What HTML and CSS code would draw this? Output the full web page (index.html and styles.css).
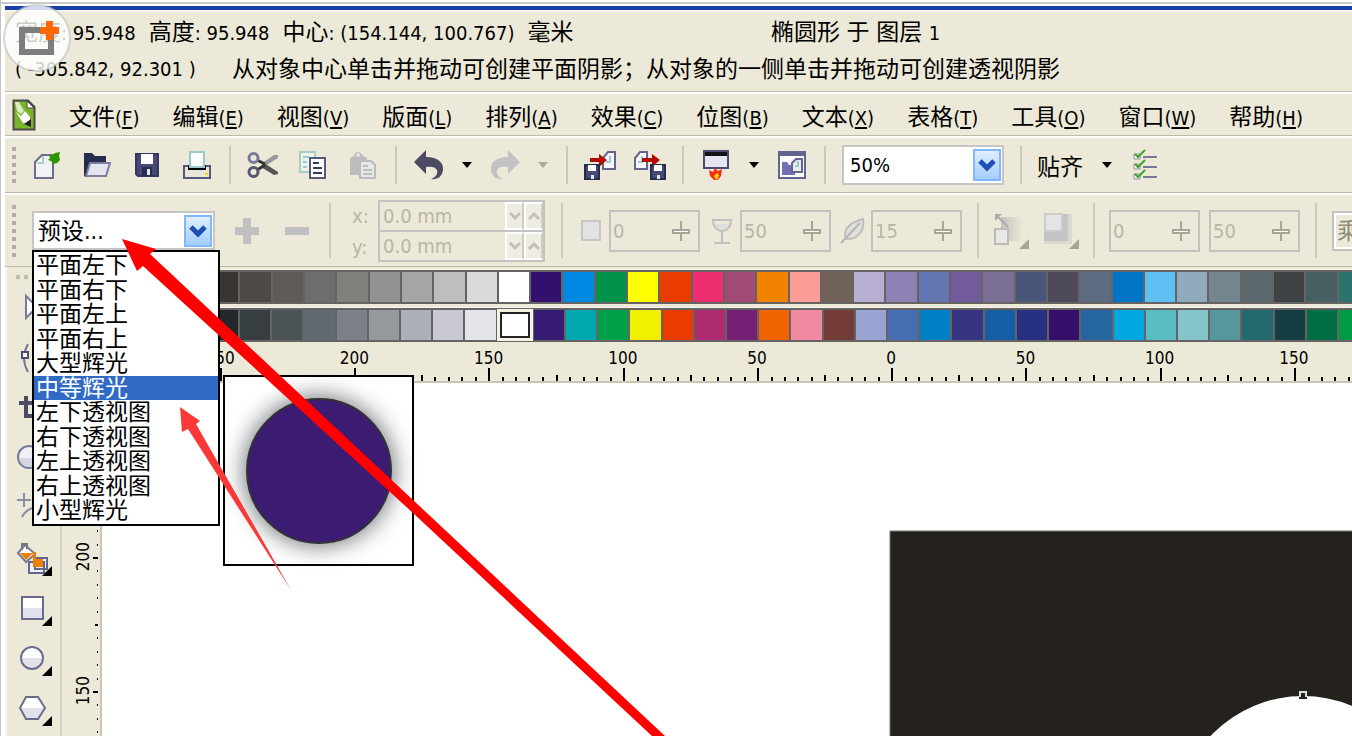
FILE: index.html
```html
<!DOCTYPE html>
<html lang="zh-CN">
<head>
    <meta charset="UTF-8">
    <meta name="viewport" content="width=device-width, initial-scale=1.0">
    <title>CorelDRAW</title>
    <link rel="stylesheet" href="styles.css">
</head>
<body>
    <div class="window">
        <div class="titleBar"></div>

        <div class="statusBar">
            <div class="statusRow">
                <div class="sizeInfo">
                    <span>宽度<span class="num">: 95.948</span></span>
                    <span>高度<span class="num">: 95.948</span></span>
                    <span>中心<span class="num">: (154.144, 100.767)</span></span>
                    <span>毫米</span>
                </div>
                <span>椭圆形 于 图层 <span class="num">1</span></span>
            </div>
            <div class="statusRow">
                <span class="cursorInfo num">( -305.842, 92.301 )</span>
                <span>从对象中心单击并拖动可创建平面阴影；从对象的一侧单击并拖动可创建透视阴影</span>
            </div>
        </div>

        <nav class="menuBar">
            <svg class="docIcon" width="24" height="32" viewBox="0 0 24 32">
                <path d="M1.500 1.500H16L22.500 8V30.500H1.500Z" fill="#7cb32c" stroke="#4a4a4a" stroke-width="2"/>
                <path d="M15 2V9H22Z" fill="#fff" stroke="#4a4a4a"/>
                <path d="M3 3L7 3L12 12L9 15L5 12Z" fill="#dcebc2"/>
                <path d="M4 13L9 17L13 12L18 18V25L11 24Z" fill="#fff"/>
                <path d="M12 25L19 20V28Z" fill="#222"/>
            </svg>
            <button>文件<span>(<u>F</u>)</span></button>
            <button>编辑<span>(<u>E</u>)</span></button>
            <button>视图<span>(<u>V</u>)</span></button>
            <button>版面<span>(<u>L</u>)</span></button>
            <button>排列<span>(<u>A</u>)</span></button>
            <button>效果<span>(<u>C</u>)</span></button>
            <button>位图<span>(<u>B</u>)</span></button>
            <button>文本<span>(<u>X</u>)</span></button>
            <button>表格<span>(<u>T</u>)</span></button>
            <button>工具<span>(<u>O</u>)</span></button>
            <button>窗口<span>(<u>W</u>)</span></button>
            <button>帮助<span>(<u>H</u>)</span></button>
        </nav>

        <div class="toolbar standardBar">
            <span class="grip"></span>
            <button class="iconBtn" aria-label="新建">
                <svg width="28" height="30" viewBox="0 0 28 30">
                    <path d="M2 28V12L9 5H20V28Z" fill="#f2f2f6" stroke="#6b6e8c" stroke-width="2"/>
                    <path d="M4 13H10V6" fill="#fff" stroke="#a9cfcc" stroke-width="2"/>
                    <path d="M16 5L20 5L22 3L27 2L26 6L27 10L24 13L20 14L18 11L15 10L17 8Z" fill="#2e9400"/>
                </svg>
            </button>
            <button class="iconBtn" aria-label="打开">
                <svg width="28" height="28" viewBox="0 0 28 28">
                    <path d="M1 25V2H9L12 5H23V12H8L3 26Z" fill="#252c4e"/>
                    <path d="M7 12H27L23 25H3Z" fill="#e4e5ef" stroke="#7a7d9c" stroke-width="2"/>
                </svg>
            </button>
            <button class="iconBtn" aria-label="保存">
                <svg width="24" height="24" viewBox="0 0 24 24">
                    <path d="M1 1H23V23H3L1 21Z" fill="#484877" stroke="#343761" stroke-width="2"/>
                    <path d="M6 1H18V11H6Z" fill="#fff"/><path d="M7 14H17V23H7Z" fill="#252c4e"/>
                    <path d="M12 16H15V22H12Z" fill="#e4e5ef"/>
                </svg>
            </button>
            <button class="iconBtn" aria-label="打印">
                <svg width="28" height="28" viewBox="0 0 28 28">
                    <path d="M1 15H27V27H1Z" fill="#e6e6da" stroke="#55597a" stroke-width="2"/>
                    <path d="M5 14H23V19H5Z" fill="#000"/>
                    <path d="M7 1H21V16H7Z" fill="#fff" stroke="#9cc" stroke-width="2"/>
                    <path d="M22 22H25V24H22Z" fill="#f5d900"/>
                </svg>
            </button>
            <span class="sep"></span>
            <button class="iconBtn" aria-label="剪切">
                <svg width="32" height="26" viewBox="0 0 32 26" fill="none">
                    <path d="M31 3L27 3L14 12L18 14L31 6Z" fill="#999"/><path d="M31 22L27 23L14 15L17 11L31 20Z" fill="#555"/>
                    <path d="M18 12L10 8M18 13L10 18" stroke="#333" stroke-width="3"/>
                    <circle cx="6.500" cy="6" r="4.500" stroke="#77799a" stroke-width="3"/>
                    <circle cx="6.500" cy="20" r="4.500" stroke="#55586f" stroke-width="3"/>
                </svg>
            </button>
            <button class="iconBtn" aria-label="复制">
                <svg width="28" height="28" viewBox="0 0 28 28">
                    <path d="M1 1H16V21H1Z" fill="#edf3e8" stroke="#a5cdc8" stroke-width="2"/>
                    <path d="M4 6H10M4 11H8M4 16H8" stroke="#9cc" stroke-width="2"/>
                    <path d="M11 7H26V27H11Z" fill="#fff" stroke="#55597a" stroke-width="2"/>
                    <path d="M14 12H20M14 17H23M14 22H23" stroke="#333a5c" stroke-width="2"/>
                </svg>
            </button>
            <button class="iconBtn" aria-label="粘贴" disabled>
                <svg width="28" height="28" viewBox="0 0 28 28">
                    <path d="M1 7L5 5Q6 1 9 1T14 5L18 7V24H1Z" fill="#bcbcbc"/>
                    <circle cx="9" cy="4" r="2" fill="#e8e8e0"/>
                    <path d="M11 10H22L26 14V27H11Z" fill="#e8e8e8" stroke="#bcbcbc" stroke-width="2"/>
                    <path d="M14 15H19M14 19H23M14 23H23" stroke="#bcbcbc" stroke-width="2"/>
                </svg>
            </button>
            <span class="sep"></span>
            <button class="iconBtn" aria-label="撤消">
                <svg width="30" height="30" viewBox="0 0 30 30">
                    <path d="M0 12L12 0V7C24 7 30 13 29 20C28 27 23 30 17 29C22 27 24 24 23 20C21 17 18 16 12 17V24Z" fill="#4d4b62"/>
                </svg>
            </button>
            <button class="caretBtn" aria-label="撤消列表"><span class="caret"></span></button>
            <button class="iconBtn" aria-label="重做" disabled>
                <svg width="30" height="30" viewBox="0 0 30 30">
                    <path d="M30 12L18 0V7C6 7 0 13 1 20C2 27 7 30 13 29C8 27 6 24 7 20C9 17 12 16 18 17V24Z" fill="#c2c2c2"/>
                </svg>
            </button>
            <button class="caretBtn" aria-label="重做列表" disabled><span class="caret off"></span></button>
            <span class="sep"></span>
            <button class="iconBtn" aria-label="导入">
                <svg width="32" height="30" viewBox="0 0 32 30">
                    <path d="M19 19V8L24 2H31V19Z" fill="#f6f6fa" stroke="#62668c" stroke-width="2"/>
                    <path d="M22 12H26V6" fill="none" stroke="#9cc" stroke-width="2"/>
                    <path d="M6 8H15V4L23 10L15 17V12H6Z" fill="#b30b00"/>
                    <path d="M1 15H15V29H1Z" fill="#484877" stroke="#252c4e" stroke-width="2"/>
                    <path d="M4 15H12V21H4Z" fill="#fff"/><path d="M7 25H10V29H7Z" fill="#e4e5ef"/>
                </svg>
            </button>
            <button class="iconBtn" aria-label="导出">
                <svg width="32" height="30" viewBox="0 0 32 30">
                    <path d="M1 19V8L6 2H13V19Z" fill="#f6f6fa" stroke="#62668c" stroke-width="2"/>
                    <path d="M4 12H8V6" fill="none" stroke="#9cc" stroke-width="2"/>
                    <path d="M8 8H18V4L26 10L18 17V12H8Z" fill="#b30b00"/>
                    <path d="M17 15H31V29H17Z" fill="#484877" stroke="#252c4e" stroke-width="2"/>
                    <path d="M20 15H28V21H20Z" fill="#fff"/><path d="M23 25H26V29H23Z" fill="#e4e5ef"/>
                </svg>
            </button>
            <span class="sep"></span>
            <button class="iconBtn" aria-label="应用程序启动器">
                <svg width="26" height="30" viewBox="0 0 26 30">
                    <path d="M1 1H25V18H1Z" fill="#e4e5ef" stroke="#4d4b72" stroke-width="2"/>
                    <path d="M2 2H24V6H2Z" fill="#111"/>
                    <path d="M6 20L10 22L12 18L15 21L19 19L18 26L15 30H11L7 26Z" fill="#f33214"/>
                    <path d="M11 26L14 23L16 25L15 28L14 30L12 28Z" fill="#ffd400"/>
                </svg>
            </button>
            <button class="caretBtn" aria-label="启动器列表"><span class="caret"></span></button>
            <button class="iconBtn" aria-label="欢迎屏幕">
                <svg width="28" height="28" viewBox="0 0 28 28">
                    <path d="M1 1H27V27H1Z" fill="#fff" stroke="#62668c" stroke-width="2"/>
                    <path d="M1 1H27V5H1Z" fill="#62668c"/>
                    <path d="M4 11H9L11 14H17V24H4Z" fill="#7270b4"/>
                    <path d="M14 21V12L18 8H24V21Z" fill="#e8eaf2" stroke="#62668c" stroke-width="2"/>
                    <path d="M17 15H20V10" fill="none" stroke="#9cc" stroke-width="2"/>
                </svg>
            </button>
            <span class="sep"></span>
            <select class="zoomSelect" aria-label="缩放级别"><option>50%</option></select>
            <span class="sep"></span>
            <button class="snapBtn">贴齐</button>
            <button class="caretBtn" aria-label="贴齐列表"><span class="caret"></span></button>
            <button class="iconBtn" aria-label="选项">
                <svg width="26" height="32" viewBox="0 0 26 32" fill="none">
                    <path d="M11 8H25M11 18H25M11 28H25" stroke="#77799a" stroke-width="2"/>
                    <path d="M2 5H8V10H2ZM2 15H8V20H2ZM2 25H8V30H2Z" fill="#fff" stroke="#8a8ca5"/>
                    <path d="M3 5L6 8L13 1M3 15L6 18L13 11M3 25L6 28L13 21" stroke="#3fa52c" stroke-width="2"/>
                </svg>
            </button>
        </div>

        <div class="toolbar propertyBar">
            <span class="grip"></span>
            <div class="presetBox">
                <select class="presetSelect" aria-label="预设列表"><option>预设...</option></select>
                <ul class="presetList" role="listbox" aria-label="预设">
                    <li role="option">平面左下</li>
                    <li role="option">平面右下</li>
                    <li role="option">平面左上</li>
                    <li role="option">平面右上</li>
                    <li role="option">大型辉光</li>
                    <li role="option" class="selected" aria-selected="true">中等辉光</li>
                    <li role="option">左下透视图</li>
                    <li role="option">右下透视图</li>
                    <li role="option">左上透视图</li>
                    <li role="option">右上透视图</li>
                    <li role="option">小型辉光</li>
                </ul>
                <div class="presetPreview"><div class="glowCircle"></div></div>
            </div>
            <button class="iconBtn" aria-label="添加预设" disabled>
                <svg width="24" height="26" viewBox="0 0 24 26"><path d="M8 0H16V9H24V17H16V26H8V17H0V9H8Z" fill="#c0c0c0"/></svg>
            </button>
            <button class="iconBtn" aria-label="删除预设" disabled>
                <svg width="24" height="26" viewBox="0 0 24 26"><path d="M0 9H24V17H0Z" fill="#c0c0c0"/></svg>
            </button>
            <span class="sep"></span>
            <div class="offsetGroup">
                <label for="offsetX">x:</label>
                <div class="offsetField">
                    <input id="offsetX" type="text" value="0.0 mm" disabled>
                    <button disabled aria-label="减小 x"><svg width="12" height="8" viewBox="0 0 12 8"><path d="M1 1L6 6L11 1" fill="none" stroke="#c3c0b6" stroke-width="3"/></svg></button>
                    <button disabled aria-label="增大 x"><svg width="12" height="8" viewBox="0 0 12 8"><path d="M1 7L6 2L11 7" fill="none" stroke="#c3c0b6" stroke-width="3"/></svg></button>
                </div>
                <label for="offsetY">y:</label>
                <div class="offsetField">
                    <input id="offsetY" type="text" value="0.0 mm" disabled>
                    <button disabled aria-label="减小 y"><svg width="12" height="8" viewBox="0 0 12 8"><path d="M1 1L6 6L11 1" fill="none" stroke="#c3c0b6" stroke-width="3"/></svg></button>
                    <button disabled aria-label="增大 y"><svg width="12" height="8" viewBox="0 0 12 8"><path d="M1 7L6 2L11 7" fill="none" stroke="#c3c0b6" stroke-width="3"/></svg></button>
                </div>
            </div>
            <span class="sep"></span>
            <label class="sliderField">
                <svg width="32" height="26" viewBox="0 0 32 26"><path d="M6 3H24V22H6Z" fill="#e2e2e2" stroke="#c6c6c6" stroke-width="2"/></svg>
                <span class="box"><input type="text" value="0" aria-label="阴影角度" disabled><svg class="knob" width="18" height="20" viewBox="0 0 18 20"><path d="M8 0H10V8H18V13H10V20H8V13H0V8H8Z" fill="#a8a595"/><path d="M2 10H16V11H2Z" fill="#fff"/></svg></span>
            </label>
            <label class="sliderField">
                <svg width="32" height="26" viewBox="0 0 32 26" fill="none"><path d="M6 2H24Q24 12 15 13Q6 12 6 2ZM15 13V24M7 25H23" stroke="#c0c0c0" stroke-width="2"/><path d="M8 6H22Q20 12 15 12T8 6Z" fill="#dedede"/></svg>
                <span class="box"><input type="text" value="50" aria-label="不透明度" disabled><svg class="knob" width="18" height="20" viewBox="0 0 18 20"><path d="M8 0H10V8H18V13H10V20H8V13H0V8H8Z" fill="#a8a595"/><path d="M2 10H16V11H2Z" fill="#fff"/></svg></span>
            </label>
            <label class="sliderField">
                <svg width="32" height="26" viewBox="0 0 32 26"><path d="M8 21C4 10 14 4 25 1C27 12 20 22 8 21Z" fill="#e0e0dd" stroke="#bdbdbd" stroke-width="2"/><path d="M3 25L22 5" stroke="#b5b5b5" stroke-width="2" fill="none"/></svg>
                <span class="box"><input type="text" value="15" aria-label="阴影羽化" disabled><svg class="knob" width="18" height="20" viewBox="0 0 18 20"><path d="M8 0H10V8H18V13H10V20H8V13H0V8H8Z" fill="#a8a595"/><path d="M2 10H16V11H2Z" fill="#fff"/></svg></span>
            </label>
            <span class="sep"></span>
            <button class="iconBtn" aria-label="羽化方向" disabled>
                <svg width="36" height="36" viewBox="0 0 36 36">
                    <defs><linearGradient id="fade"><stop offset="0" stop-color="#c4c3bd"/><stop offset="1" stop-color="#ece9d8"/></linearGradient></defs>
                    <path d="M8 4H30V28H8Z" fill="url(#fade)"/>
                    <path d="M4 3L15 14" fill="none" stroke="#aaa" stroke-width="2"/><path d="M2 1H9L2 8Z" fill="#aaa"/>
                    <path d="M2 16H15V31H2Z" fill="#e8e8e8" stroke="#bbb" stroke-width="2"/>
                    <path d="M36 26V36H26Z" fill="#a8a595"/>
                </svg>
            </button>
            <button class="iconBtn" aria-label="羽化边缘" disabled>
                <svg width="36" height="36" viewBox="0 0 36 36">
                    <path d="M1 1H29V31H1Z" fill="#dbd9cf"/><path d="M1 1H25V28H1Z" fill="#c3c3c3"/>
                    <path d="M2 1H19V18H2Z" fill="#e4e4e4" stroke="#ccc" stroke-width="2"/>
                    <path d="M36 26V36H26Z" fill="#a8a595"/>
                </svg>
            </button>
            <span class="sep"></span>
            <span class="sliderField"><span class="box"><input type="text" value="0" aria-label="淡出" disabled><svg class="knob" width="18" height="20" viewBox="0 0 18 20"><path d="M8 0H10V8H18V13H10V20H8V13H0V8H8Z" fill="#a8a595"/><path d="M2 10H16V11H2Z" fill="#fff"/></svg></span></span>
            <span class="sliderField"><span class="box"><input type="text" value="50" aria-label="阴影延展" disabled><svg class="knob" width="18" height="20" viewBox="0 0 18 20"><path d="M8 0H10V8H18V13H10V20H8V13H0V8H8Z" fill="#a8a595"/><path d="M2 10H16V11H2Z" fill="#fff"/></svg></span></span>
            <span class="sep"></span>
            <select class="modeSelect" aria-label="合并模式" disabled><option>乘</option></select>
        </div>

        <div class="workspace">
            <div class="toolbox">
                <span class="gripH"></span>
                <button aria-label="挑选"><svg width="36" height="34" viewBox="0 0 36 34"><path d="M10 4V26L16 20H26Z" fill="#fff" stroke="#77799a" stroke-width="2"/></svg></button>
                <button aria-label="形状"><svg width="36" height="34" viewBox="0 0 36 34" fill="none"><path d="M12 2Q4 16 12 30" stroke="#77799a" stroke-width="2"/><path d="M6 10H12V16H6Z" fill="#fff" stroke="#4d4b72" stroke-width="2"/></svg></button>
                <button aria-label="裁剪"><svg width="36" height="34" viewBox="0 0 36 34"><path d="M10 4V24H28M3 11H22V30" fill="none" stroke="#4d4b62" stroke-width="4"/></svg></button>
                <button aria-label="缩放"><svg width="36" height="34" viewBox="0 0 36 34"><circle cx="13" cy="15" r="11" fill="#f0f0f6" stroke="#77799a" stroke-width="2"/><path d="M3 16H23Q21 25 13 25T3 16Z" fill="#d5d6e4"/></svg></button>
                <button aria-label="手绘"><svg width="36" height="34" viewBox="0 0 36 34"><path d="M8 1V15M1 8H15M6 25Q10 17 20 15" fill="none" stroke="#8a8ca5" stroke-width="2"/></svg></button>
                <button aria-label="智能填充"><svg width="36" height="34" viewBox="0 0 36 34">
                    <path d="M9 3L19 12L10 20L2 11Z" fill="#fff" stroke="#77799a" stroke-width="2"/><path d="M4 11H17L10 18Z" fill="#ee8000"/>
                    <path d="M6 8V2H11V7" fill="none" stroke="#777" stroke-width="2"/>
                    <path d="M13 20H28V31H13ZM19 16H31V27H19Z" fill="#f0f0f6" stroke="#62668c" stroke-width="2"/><path d="M17 10H20V17H27V25H17Z" fill="#ee8000"/>
                    <path d="M36 24V34H26Z"/></svg></button>
                <button aria-label="矩形"><svg width="36" height="34" viewBox="0 0 36 34"><path d="M6 5H27V27H6Z" fill="#fff"/><path d="M6 16H27V27H6Z" fill="#e0e1ea"/><path d="M6 5H27V27H6Z" fill="none" stroke="#6b6c8c" stroke-width="2"/><path d="M36 24V34H26Z"/></svg></button>
                <button aria-label="椭圆形"><svg width="36" height="34" viewBox="0 0 36 34"><circle cx="16" cy="16" r="11" fill="#fff"/><path d="M5 16H27A11 11 0 0 1 5 16Z" fill="#e0e1ea"/><circle cx="16" cy="16" r="11" fill="none" stroke="#6b6c8c" stroke-width="2"/><path d="M36 24V34H26Z"/></svg></button>
                <button aria-label="多边形"><svg width="36" height="34" viewBox="0 0 36 34"><path d="M10 5H22L29 16L22 27H10L4 16Z" fill="#fff"/><path d="M4 16H29L22 27H10Z" fill="#e0e1ea"/><path d="M10 5H22L29 16L22 27H10L4 16Z" fill="none" stroke="#6b6c8c" stroke-width="2"/><path d="M36 24V34H26Z"/></svg></button>
            </div>

            <div class="mainArea">
                <div class="palette" id="paletteTop"></div>
                <div class="palette" id="paletteBottom"></div>
                <div class="ruler rulerH" id="rulerH"></div>
                <div class="drawRow">
                    <div class="ruler rulerV" id="rulerV"></div>
                    <div class="canvas">
                        <svg class="drawing" width="1300" height="500" viewBox="0 0 1300 500">
                            <rect x="788" y="148" width="600" height="500" fill="#25221d" stroke="#77777a"/>
                            <circle cx="1201" cy="440" r="127" fill="#fff"/>
                            <path d="M1198 309H1204V315H1198Z" fill="#222" stroke="#ddd" stroke-width="2"/>
                            <path d="M1197 314H1205V316H1197Z" fill="#222"/>
                        </svg>
                    </div>
                </div>
            </div>
        </div>

        <!-- tutorial marks on top of the window -->
        <svg class="marks" width="700" height="736" viewBox="0 0 700 736">
            <path d="M122 239L156 249L150 254L413 500L665 736H652L413 513L143 266L137 271Z" fill="#f00"/>
            <path d="M180 407L200 421L196 424L291 590L188 429L182 432Z" fill="#fb3838"/>
        </svg>
        <svg class="badge" width="74" height="74" viewBox="0 0 74 74">
            <circle cx="37" cy="37" r="33" fill="#fff" fill-opacity="0.800" stroke="#bbb" stroke-opacity="0.600" stroke-width="2"/>
            <path d="M22 29H51V51H22Z" fill="none" stroke="#7d7d7d" stroke-width="6"/>
            <path d="M46 20H53V26H59V33H53V39H46V33H40V26H46Z" fill="#ff6700"/>
        </svg>
    </div>
    <script src="script.js"></script>
</body>
</html>
```

FILE: styles.css
```css
* {
    box-sizing: border-box;
}

body {
    margin: 0;
    background-color: white;
    color: black;
    font-family: "DejaVu Sans Condensed", "Noto Sans CJK SC", sans-serif;
    font-size: 23px;
}

button, input, select {
    font: inherit;
    color: inherit;
    margin: 0;
}

button {
    padding: 0;
    border: none;
    background: none;
}

.window {
    position: relative;
    display: flex;
    flex-direction: column;
    height: 100vh;
    padding: 3px 0 0 4px;
    border-left: 1px solid #c4c4c4;
    background-color: white;
    overflow: hidden;
}

.window::before {
    content: "";
    position: absolute;
    left: 0;
    right: 0;
    top: 2px;
    height: 2px;
    background-color: #c8c8c8;
}

.titleBar {
    flex: none;
    height: 8px;
    margin-top: 1px;
    border-top: 2px solid white;
    border-bottom: 2px solid #f6f4ea;
    background-color: #1440a8;
}

.num {
    font-size: 20px;
}

/* status */
.statusBar {
    flex: none;
    height: 80px;
    padding: 2px 10px;
    background-color: #ece9d8;
    border-bottom: 1px solid #bfbba8;
}

.statusRow {
    display: flex;
    align-items: center;
    height: 37px;
    line-height: 37px;
    white-space: nowrap;
}

.sizeInfo {
    display: flex;
    gap: 13px;
    width: 756px;
}

.cursorInfo {
    width: 217px;
}

/* menu */
.menuBar {
    flex: none;
    display: flex;
    align-items: center;
    gap: 33px;
    height: 44px;
    padding-left: 7px;
    background-color: #ece9d8;
    border-top: 2px solid white;
    border-bottom: 1px solid #bfbba8;
    white-space: nowrap;
}

.menuBar span {
    font-size: 20px;
}

.menuBar u {
    text-underline-offset: 2px;
}

/* toolbars */
.toolbar {
    flex: none;
    display: flex;
    align-items: center;
    padding-left: 7px;
    background-color: #ece9d8;
    border-top: 2px solid white;
    border-bottom: 1px solid #bfbba8;
}

.toolbar > * {
    flex: none;
}

.standardBar {
    height: 57px;
}

.propertyBar {
    height: 74px;
}

.grip {
    width: 4px;
    height: 36px;
    margin-right: 6px;
    background: repeating-linear-gradient(#b3b0a0 0 4px, transparent 4px 8px);
}

.propertyBar .grip {
    height: 52px;
    margin-right: 16px;
}

.sep {
    align-self: stretch;
    width: 2px;
    margin: 8px 7px;
    background-color: #cbc8b3;
}

.iconBtn {
    display: flex;
    align-items: center;
    justify-content: center;
    width: 50px;
    height: 40px;
}

.caretBtn {
    display: flex;
    align-items: center;
    justify-content: center;
    width: 26px;
    height: 40px;
}

.caret {
    border: 5px solid transparent;
    border-top: 6px solid black;
    border-bottom: none;
}

.caret.off {
    border-top-color: #aca899;
}

.caretBtn + .sep {
    margin-left: 10px;
}

.zoomSelect, .presetSelect {
    appearance: none;
    border: 2px solid #c5c5c5;
    border-radius: 0;
    background: white url('data:image/svg+xml,<svg xmlns="http://www.w3.org/2000/svg" width="28" height="32"><defs><linearGradient id="a" x2="0" y2="1"><stop stop-color="%23e3effe"/><stop offset="1" stop-color="%23a0ccff"/></linearGradient></defs><rect x="1" y="1" width="26" height="30" fill="url(%23a)" stroke="%2380b8fa" stroke-width="2"/><path d="M7 12l7 7 7-7" fill="none" stroke="%231e4fb4" stroke-width="5"/></svg>') no-repeat right 1px center;
}

.zoomSelect {
    width: 162px;
    height: 40px;
    margin: 0 9px;
    padding: 0 6px;
    font-size: 20px;
}

.presetSelect {
    display: block;
    width: 183px;
    height: 39px;
    padding: 0 4px;
}

.snapBtn {
    margin-left: 8px;
    margin-right: 11px;
}

.presetBox {
    position: relative;
    margin-right: 7px;
}

.presetList {
    position: absolute;
    z-index: 5;
    top: 39px;
    left: 0;
    display: grid;
    grid-auto-rows: 1fr;
    width: 188px;
    height: 276px;
    margin: 0;
    padding: 1px 0;
    border: 2px solid black;
    background-color: white;
    list-style: none;
    line-height: 24px;
}

.presetList li {
    padding-left: 2px;
}

.presetList .selected {
    background-color: #316ac5;
    color: white;
}

.presetPreview {
    position: absolute;
    z-index: 4;
    top: 164px;
    left: 191px;
    display: flex;
    align-items: center;
    justify-content: center;
    width: 191px;
    height: 191px;
    border: 2px solid black;
    background-color: white;
}

.glowCircle {
    width: 146px;
    height: 146px;
    border: 2px solid #333;
    border-radius: 50%;
    background-color: #3b1c72;
    box-shadow: 0 0 22px 2px rgba(20, 25, 35, 0.600);
}

.offsetGroup {
    display: grid;
    grid-template-columns: 26px 167px;
    align-items: center;
    margin-left: 14px;
    color: #b9b5a5;
    font-size: 20px;
}

.offsetField {
    display: flex;
    height: 32px;
    border: 2px solid #c3c2bf;
}

.offsetField:last-child {
    height: 30px;
    border-top: none;
}

.offsetField input {
    flex: 1;
    min-width: 0;
    padding: 0 3px;
    border: none;
    background: none;
}

.offsetField button {
    width: 19px;
    border: 2px solid white;
    border-right-color: #cfccc0;
    background-color: #efede3;
    line-height: 0;
}

.propertyBar .offsetGroup + .sep {
    margin-left: 16px;
    margin-right: 13px;
}

.sliderField {
    display: flex;
    align-items: center;
    color: #b9b5a5;
    font-size: 20px;
}

.sliderField > svg {
    margin-right: 1px;
}

.box {
    display: flex;
    align-items: center;
    width: 91px;
    height: 42px;
    padding-right: 8px;
    border: 2px solid #c3c2bf;
}

.box input {
    flex: 1;
    min-width: 0;
    padding: 0 2px;
    border: none;
    background: none;
}

.sliderField + .sliderField {
    margin-left: 7px;
}

.propertyBar .sliderField + .sep {
    margin-left: 15px;
}

.propertyBar .sep + span.sliderField {
    margin-left: 7px;
}

span.sliderField + span.sliderField {
    margin-left: 9px;
}

.modeSelect {
    appearance: none;
    width: 120px;
    height: 40px;
    margin-left: 8px;
    padding: 0 3px;
    border: 2px solid #c3c2bf;
    outline: 2px solid white;
    outline-offset: -4px;
    border-radius: 0;
    background-color: #ece9d8;
    color: #8d8a7c;
    opacity: 1;
}

/* work area */
.workspace {
    flex: 1;
    display: flex;
    min-height: 0;
    background-color: #ece9d8;
}

.toolbox {
    flex: none;
    display: flex;
    flex-direction: column;
    width: 57px;
    padding: 8px 9px;
    border-left: 2px solid #f8f7f0;
    border-right: 2px solid #d6d2c1;
    overflow: hidden;
}

.gripH {
    flex: none;
    width: 36px;
    height: 4px;
    margin-bottom: 5px;
    background: repeating-linear-gradient(90deg, #c0bdae 0 4px, transparent 4px 8px);
}

.toolbox button {
    flex: none;
    height: 50px;
    line-height: 0;
}

.mainArea {
    flex: 1;
    display: flex;
    flex-direction: column;
    min-width: 0;
    overflow: hidden;
}

.palette {
    flex: none;
    display: flex;
    gap: 2px;
    height: 35px;
    margin: 2px -17px 1px 17px;
    padding: 2px 0;
    background-color: #666463;
    border-top: 1px solid #f5f4ee;
}

.swatch {
    flex: 1;
    min-width: 0;
}

.swatch.current {
    margin: -1px;
    border: 3px solid #f5f3e6;
    outline: 2px solid #222;
    outline-offset: -5px;
}

.ruler {
    display: flex;
    background-color: #ece9d8;
    font-size: 17px;
    line-height: 20px;
    overflow: hidden;
}

.rulerH {
    flex: none;
    height: 40px;
    margin-right: -9px;
    padding-left: 91px;
    border-bottom: 2px solid #c8c5b4;
}

.rulerV {
    flex: none;
    flex-direction: column;
    width: 40px;
    padding-top: 107px;
    border-right: 2px solid #c8c5b4;
}

.segment {
    flex: 1;
    display: flex;
    flex-direction: column;
    align-items: center;
    justify-content: space-between;
    padding-top: 5px;
}

.rulerV .segment {
    flex: none;
    flex-direction: row;
    height: 134px;
    padding: 0 2px 0 11px;
}

.rulerV .segment span {
    writing-mode: vertical-rl;
    transform: rotate(180deg);
}

.ticksH {
    width: 100%;
    height: 13px;
}

.ticksV {
    width: 8px;
    height: 100%;
}

.drawRow {
    flex: 1;
    display: flex;
    min-height: 0;
}

.canvas {
    flex: 1;
    position: relative;
    min-width: 0;
    background-color: white;
    overflow: hidden;
}

.drawing {
    position: absolute;
    left: 0;
    top: 0;
}

/* overlays */
.marks {
    position: absolute;
    z-index: 10;
    left: -1px;
    top: 0;
    pointer-events: none;
}

.badge {
    position: absolute;
    z-index: 11;
    left: -1px;
    top: 1px;
}
```

FILE: script.js
```js
const topColors = [
    '#000000', '#0d0b0a', '#1c1917', '#2b2825', '#3a3632', '#4d4944', '#5f5b59', '#6e6d6b',
    '#80807c', '#929292', '#a7a6a5', '#bfbebd', '#dadad8', '#ffffff', '#330f6e', '#0089e3',
    '#00914a', '#ffff00', '#ea3c00', '#ef2e72', '#a14a74', '#f38200', '#fa9d96', '#716359',
    '#b9afd5', '#9081b5', '#6475b3', '#715b9d', '#7b6f95', '#495679', '#4e4a5b', '#5e6c83',
    '#0075c6', '#5fbff2', '#90aabe', '#748791', '#5b676d', '#404346', '#466062', '#2b736c'
];

const bottomColors = [
    '#000000', '#090b0c', '#121517', '#1b1f21', '#24282b', '#363e41', '#4a5456', '#626a71',
    '#7b8089', '#95989d', '#aeb0b8', '#c9cad1', '#e4e5ea', '#ffffff', '#351b74', '#00a8af',
    '#009f49', '#f0f000', '#ea3c00', '#ae2a71', '#762075', '#f16200', '#f289a3', '#733c37',
    '#9aa4d2', '#466fb3', '#007fc7', '#363383', '#155ea5', '#283082', '#370f6b', '#2566a0',
    '#00a7e0', '#59bdc3', '#84c4ca', '#55979d', '#23696d', '#143e42', '#006e42', '#009a47'
];

function fillPalette(id, colors, current) {
    const palette = document.getElementById(id);
    colors.forEach(function(color, i) {
        const swatch = document.createElement('button');
        swatch.className = i === current ? 'swatch current' : 'swatch';
        swatch.style.backgroundColor = color;
        swatch.setAttribute('aria-label', color);
        palette.appendChild(swatch);
    });
}

// Each segment is one label with its main tick in the middle and ten small steps
function fillRuler(id, labels, vertical) {
    const ruler = document.getElementById(id);
    labels.forEach(function(label) {
        let ticks = '';
        for (let i = 0; i < 10; i++) {
            const pos = i * 10 + '%';
            const len = i === 5 ? 13 : i === 0 ? 6 : 4;
            if (vertical) {
                ticks += `<rect x="${Math.max(0, 8 - len)}" y="${pos}" width="${len}" height="2"/>`;
            } else {
                ticks += `<rect x="${pos}" y="${13 - len}" width="2" height="${len}"/>`;
            }
        }
        const segment = document.createElement('div');
        segment.className = 'segment';
        segment.innerHTML = `<span>${label}</span><svg class="${vertical ? 'ticksV' : 'ticksH'}" shape-rendering="crispEdges">${ticks}</svg>`;
        ruler.appendChild(segment);
    });
}

fillPalette('paletteTop', topColors, -1);
fillPalette('paletteBottom', bottomColors, 13);
fillRuler('rulerH', [250, 200, 150, 100, 50, 0, 50, 100, 150], false);
fillRuler('rulerV', [200, 150], true);
```
